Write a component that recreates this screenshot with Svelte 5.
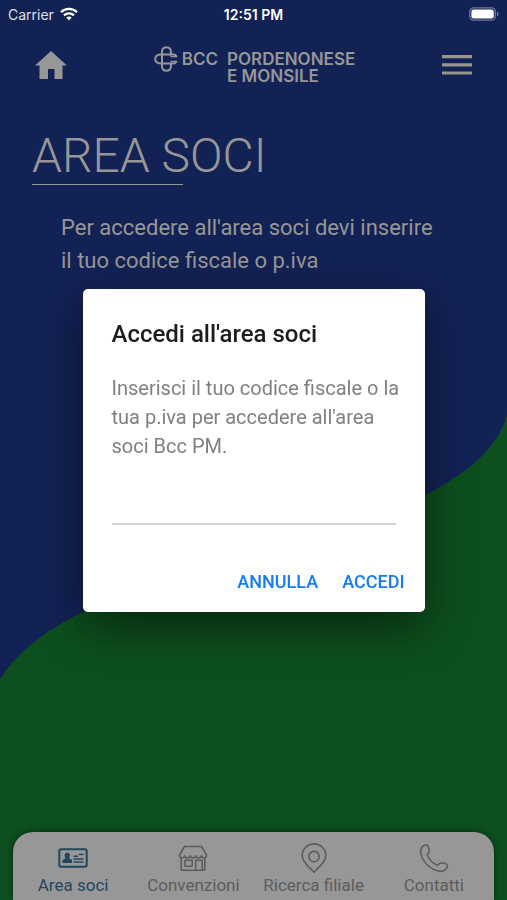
<script lang="ts">
	let code = $state('');
	let open = $state(true);
	let active = $state('soci');

	const tabs = [
		{ id: 'soci', label: 'Area soci' },
		{ id: 'convenzioni', label: 'Convenzioni' },
		{ id: 'filiale', label: 'Ricerca filiale' },
		{ id: 'contatti', label: 'Contatti' }
	];

	function close() {
		open = false;
	}
</script>

<div class="page">
	<svg class="wave" viewBox="0 0 507 900" preserveAspectRatio="none" aria-hidden="true">
		<path d="M0 679C22 647 50 628 83 612C180 570 335 543 425 495C468 473 498 448 507 415V900H0Z" fill="#0d4f1e" />
	</svg>

	<div class="status">
		<span class="carrier">
			Carrier
			<svg width="18" height="14" viewBox="0 0 18 14" aria-hidden="true">
				<g fill="none" stroke="#fff" stroke-width="2.4">
					<path d="M1 5.1C5.5 0.8 12.5 0.8 17 5.1" />
					<path d="M4 8.4C6.8 5.7 11.2 5.7 14 8.4" />
				</g>
				<path d="M6.3 10.6C7.8 9.2 10.2 9.2 11.7 10.6L9 13.5Z" fill="#fff" />
			</svg>
		</span>
		<span class="time">12:51 PM</span>
		<span class="battery">
			<svg width="30" height="14" viewBox="0 0 30 14" aria-hidden="true">
				<rect x="0.8" y="0.8" width="25.6" height="12.4" rx="4" fill="none" stroke="#7079a0" stroke-width="1.3" />
				<rect x="2.4" y="2.4" width="22.4" height="9.2" rx="2.4" fill="#fff" />
				<path d="M28 4.6C30 5.4 30 8.6 28 9.4Z" fill="#7079a0" />
			</svg>
		</span>
	</div>

	<header>
		<button class="icon" aria-label="Home">
			<svg width="32" height="28" viewBox="0 0 32 28" aria-hidden="true">
				<path d="M16 0L32 14.5H27.5V28H19.5V18H13V28H4.5V14.5H0Z" fill="#979797" />
			</svg>
		</button>
		<div class="brand">
			<svg width="24" height="26" viewBox="0 0 24 26" fill="none" stroke="#979797" stroke-width="2" aria-hidden="true">
				<path d="M8 17.5V6.2C8 3 9.6 1.2 12.4 1.2S17 3 17 6.2V9.5" />
				<path d="M8 16V19.8C8 23 9.6 24.8 12.4 24.8S17 23 17 19.8V16.5" />
				<path d="M17 8.6H6.8C3.2 8.6 1.2 10.2 1.2 13S3.2 17.4 6.8 17.4H17" />
				<path d="M17 8.6H19.5C21 8.6 22 9.4 22.4 11M17 17.4H19.5C21 17.4 22 16.6 22.4 15" />
				<path d="M16.5 10.6H23.2M16.5 15.4H23.2" stroke-width="1.4" />
			</svg>
			<strong class="bcc">BCC</strong>
			<strong class="bank"><span>PORDENONESE</span><span>E MONSILE</span></strong>
		</div>
		<button class="icon" aria-label="Menu">
			<svg width="30" height="20" viewBox="0 0 30 20" aria-hidden="true">
				<path d="M0 1.6H30M0 9.8H30M0 18H30" stroke="#97978f" stroke-width="3.2" />
			</svg>
		</button>
	</header>

	<main>
		<h1>AREA SOCI</h1>
		<p>Per accedere all'area soci devi inserire il tuo codice fiscale o p.iva</p>
	</main>

	<nav>
		{#each tabs as tab}
			<button class="tab" class:active={active === tab.id} onclick={() => (active = tab.id)}>
				<svg width="30" height="30" viewBox="0 0 30 30" fill="none" stroke="currentColor" stroke-width="1.6" stroke-linejoin="round" aria-hidden="true">
					{#if tab.id === 'soci'}
						<rect x="1.3" y="6.2" width="27.4" height="17.6" rx="2" stroke-width="2" />
						<path d="M4.5 20V17.7C4.5 16 6.3 15.9 7.7 15.4C6 13.2 6.4 9.6 9.3 9.6S12.6 13.2 10.9 15.4C12.3 15.9 14 16 14 17.7V20Z" fill="currentColor" stroke="none" />
						<path d="M15.5 13.3H20M21 11.4H25.5M15.5 16.1H25.5M15.5 19H25.5" stroke-width="1.5" />
					{:else if tab.id === 'convenzioni'}
						<path d="M6.5 3.5H23.5L28.5 12C28.5 15.5 23.8 15.5 23.4 12.8C22.8 15.6 18 15.6 17.6 12.8C17 15.6 12.8 15.6 12.4 12.8C11.8 15.6 7 15.6 6.6 12.8C6 15.5 1.5 15.5 1.5 12Z" />
						<path d="M3.2 15V26.5Q3.2 27.3 4 27.3H26Q26.8 27.3 26.8 26.5V15" />
						<rect x="7" y="17.3" width="7.2" height="6" />
						<path d="M17.7 27V17.3H24.2V27" />
					{:else if tab.id === 'filiale'}
						<path d="M15 29.2C12.5 26 3.2 20 3.2 12.5A11.8 11.6 0 0 1 26.8 12.5C26.8 20 17.5 26 15 29.2Z" />
						<circle cx="15" cy="13.6" r="5.2" />
					{:else}
						<path d="M5.5 2.3C2.5 4 1.2 6.2 1.7 9.5C3 18.5 11.5 27 20.8 28.3C24.3 28.8 27 27 28.3 23.8C28.6 22.8 28.4 21.6 27.5 21.1C25.5 20 23.5 19.8 21.2 20.2C20 20.5 19.5 22.3 18.2 22.2C14 20.4 10 16.2 8.2 12C8 10.7 9.8 10.2 10.1 9C10.6 6.7 9.9 4.7 8.8 2.8C8 1.6 6.6 1.6 5.5 2.3Z" />
					{/if}
				</svg>
				<span>{tab.label}</span>
			</button>
		{/each}
	</nav>
</div>

{#if open}
	<div class="backdrop">
		<form class="dialog" role="dialog" aria-labelledby="dialog-title" onsubmit={(e) => e.preventDefault()}>
			<h2 id="dialog-title">Accedi all'area soci</h2>
			<label for="code">Inserisci il tuo codice fiscale o la tua p.iva per accedere all'area soci Bcc PM.</label>
			<input id="code" type="text" bind:value={code} />
			<div class="actions">
				<button type="button" onclick={close}>ANNULLA</button>
				<button type="submit">ACCEDI</button>
			</div>
		</form>
	</div>
{/if}

<style>
	:global(body) {
		margin: 0;
		background: #132255;
	}

	.page {
		position: relative;
		display: flex;
		flex-direction: column;
		min-height: 100vh;
		background: #132255;
		color: #979797;
		font-family: Roboto, sans-serif;
		overflow: hidden;
		isolation: isolate;
	}

	.wave {
		position: absolute;
		inset: 0;
		width: 100%;
		height: 100%;
		z-index: -1;
	}

	button {
		padding: 0;
		border: none;
		background: none;
		color: inherit;
		font: inherit;
		cursor: pointer;
	}

	svg {
		display: block;
	}

	.status {
		display: grid;
		grid-template-columns: 1fr auto 1fr;
		align-items: center;
		height: 28px;
		padding: 0 8px;
		color: #fff;
		font-family: Inter, sans-serif;
		font-size: 14px;
	}

	.carrier {
		display: flex;
		align-items: center;
		gap: 6px;
		color: #dde0ea;
	}

	.time {
		font-weight: 600;
	}

	.battery {
		justify-self: end;
	}

	header {
		display: flex;
		align-items: center;
		justify-content: space-between;
		height: 74px;
		padding: 0 35px;
	}

	.brand {
		display: flex;
		align-items: flex-start;
		padding-top: 6px;
		font-family: Inter, sans-serif;
		font-size: 17px;
		font-weight: 600;
		line-height: 17px;
	}

	.brand svg {
		margin-top: -5px;
	}

	.brand strong {
		font-weight: inherit;
	}

	.bcc {
		margin: 0 9px 0 4px;
	}

	.bank {
		display: flex;
		flex-direction: column;
	}

	main {
		flex: 1;
		padding: 26px 32px;
	}

	h1 {
		margin: 0;
		font-size: 48px;
		font-weight: 300;
		line-height: 56px;
	}

	h1::after {
		content: "";
		display: block;
		width: 34%;
		height: 1px;
		background: #979797;
	}

	p {
		margin: 26px 29px;
		font-size: 22px;
		line-height: 33px;
	}

	nav {
		display: grid;
		grid-template-columns: repeat(4, 1fr);
		margin: 0 13px;
		padding-top: 11px;
		height: 57px;
		border-radius: 20px 20px 0 0;
		background: #979797;
		box-shadow: 0 0 6px rgba(0, 0, 0, 0.5);
	}

	.tab {
		display: flex;
		flex-direction: column;
		align-items: center;
		color: #5c5c5c;
		font-size: 17px;
		line-height: 25px;
		white-space: nowrap;
	}

	.tab.active {
		color: #1f475f;
	}

	.backdrop {
		position: fixed;
		inset: 0;
		display: flex;
		align-items: center;
		justify-content: center;
		padding: 20px;
		font-family: Roboto, sans-serif;
	}

	.dialog {
		display: flex;
		flex-direction: column;
		box-sizing: border-box;
		width: 100%;
		max-width: 342px;
		padding: 30px 20px 12px 29px;
		border-radius: 5px;
		background: #fff;
		box-shadow: 0 14px 46px rgba(0, 0, 0, 0.5);
	}

	h2 {
		margin: 0 0 25px;
		color: #1c1c1c;
		font-size: 24px;
		font-weight: 500;
		line-height: 30px;
	}

	label {
		color: #808080;
		font-size: 20px;
		line-height: 29px;
	}

	input {
		height: 64px;
		margin-right: 9px;
		padding: 24px 0 8px;
		box-sizing: border-box;
		border: none;
		border-bottom: 2px solid #d2d2d2;
		border-radius: 0;
		outline: none;
		background: transparent;
		color: #1c1c1c;
		font: inherit;
		font-size: 18px;
	}

	.actions {
		display: flex;
		justify-content: flex-end;
		gap: 24px;
		margin-top: 39px;
	}

	.actions button {
		height: 36px;
		color: #147df5;
		font-size: 18px;
		font-weight: 500;
	}
</style>
